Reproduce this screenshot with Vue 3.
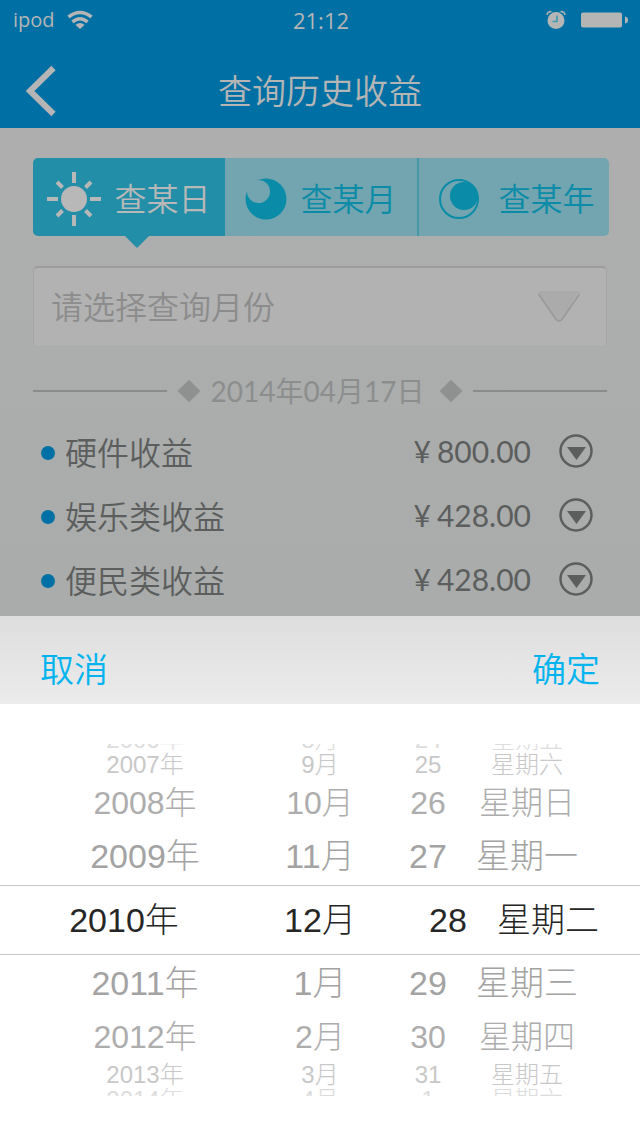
<script setup>
import { ref } from 'vue'

const tabs = [
  { id: 'day', label: '查某日' },
  { id: 'month', label: '查某月' },
  { id: 'year', label: '查某年' },
]
const activeTab = ref('day')
const month = ref('')

const items = [
  { name: '硬件收益', amount: '800.00' },
  { name: '娱乐类收益', amount: '428.00' },
  { name: '便民类收益', amount: '428.00' },
]

// depth: distance of a wheel row from the selected one
const wheel = [
  { depth: 'edge first', cells: ['2006年', '8月', '24', '星期五'] },
  { depth: 'far', cells: ['2007年', '9月', '25', '星期六'] },
  { depth: 'mid', cells: ['2008年', '10月', '26', '星期日'] },
  { depth: 'near', cells: ['2009年', '11月', '27', '星期一'] },
  { depth: 'selected', cells: ['2010年', '12月', '28', '星期二'] },
  { depth: 'near', cells: ['2011年', '1月', '29', '星期三'] },
  { depth: 'mid', cells: ['2012年', '2月', '30', '星期四'] },
  { depth: 'far', cells: ['2013年', '3月', '31', '星期五'] },
  { depth: 'edge', cells: ['2014年', '4月', '1', '星期六'] },
]
</script>

<template>
  <div class="page">
    <header class="header">
      <div class="status">
        <div class="carrier">
          <span>ipod</span>
          <svg class="wifi" viewBox="0 0 26 20" aria-hidden="true">
            <path d="M1.500 7Q13-2 24.500 7" fill="none" stroke="currentColor" stroke-width="3.500" />
            <path d="M5.500 12Q13 5.500 20.500 12" fill="none" stroke="currentColor" stroke-width="3.500" />
            <path d="M8.500 15Q13 11 17.500 15L13 19Z" fill="currentColor" />
          </svg>
        </div>
        <time>21:12</time>
        <div class="indicators">
          <svg class="alarm" viewBox="0 0 20 20" aria-hidden="true">
            <circle cx="10" cy="10.500" r="8.500" fill="currentColor" />
            <path d="M1 5Q1.500 1.500 5.500 1.500M19 5Q18.500 1.500 14.500 1.500" fill="none" stroke="currentColor" stroke-width="1.500" />
            <path d="M11 5.500V11.500H6.500" fill="none" stroke="#3f9bb0" stroke-width="1.700" />
          </svg>
          <svg class="battery" viewBox="0 0 48 16" aria-hidden="true">
            <rect x="0" y="0.500" width="41" height="15" rx="2" fill="currentColor" />
            <path d="M44 4.500Q47 5 47 8T44 11.500Z" fill="currentColor" />
          </svg>
        </div>
      </div>
      <div class="nav">
        <button class="back" type="button" aria-label="返回">
          <svg viewBox="0 0 30 50" aria-hidden="true">
            <path d="M27.500 2L4 25L27.500 48" fill="none" stroke="currentColor" stroke-width="6" />
          </svg>
        </button>
        <h1>查询历史收益</h1>
      </div>
    </header>

    <main class="content">
      <div class="tabs" role="tablist">
        <button
          v-for="tab in tabs"
          :key="tab.id"
          type="button"
          role="tab"
          class="tab"
          :class="{ active: activeTab === tab.id }"
          :aria-selected="activeTab === tab.id"
          @click="activeTab = tab.id"
        >
          <svg v-if="tab.id === 'day'" class="sun" viewBox="-27 -27 54 54" aria-hidden="true">
            <circle r="13" fill="currentColor" />
            <path
              d="M0-27V-16M0 16V27M-27 0H-16M16 0H27M-17-17L-11.500-11.500M17-17L11.500-11.500M-17 17L-11.500 11.500M17 17L11.500 11.500"
              stroke="currentColor"
              stroke-width="4"
            />
          </svg>
          <svg v-else-if="tab.id === 'month'" class="moon" viewBox="-21 -21 42 42" aria-hidden="true">
            <circle r="20.500" fill="currentColor" />
            <circle cx="-7.500" cy="-7.500" r="11.500" fill="#72a5af" />
          </svg>
          <svg v-else class="eclipse" viewBox="-20 -20 46 42" aria-hidden="true">
            <circle cy="1" r="19" fill="none" stroke="currentColor" stroke-width="2" />
            <circle cx="5" cy="-2" r="14" fill="currentColor" />
          </svg>
          <span>{{ tab.label }}</span>
        </button>
      </div>

      <div class="field">
        <select v-model="month" aria-label="查询月份">
          <option value="">请选择查询月份</option>
        </select>
        <svg class="chevron" viewBox="0 0 44 34" aria-hidden="true">
          <path d="M3 2H41L25 30Q22 33 19 30L1 4Z" fill="#ababab" />
          <path d="M1.500 4L19 29.500Q22 32.500 25 29.500L42.500 4" fill="none" stroke="#999" stroke-width="1.500" />
          <path d="M2 2H42" stroke="#a5a5a5" stroke-width="1" />
        </svg>
      </div>

      <div class="date">
        <i class="rule"></i>
        <i class="diamond"></i>
        <h2>2014年04月17日</h2>
        <i class="diamond"></i>
        <i class="rule"></i>
      </div>

      <ul class="items">
        <li v-for="item in items" :key="item.name">
          <i class="dot"></i>
          <span class="name">{{ item.name }}</span>
          <span class="amount"><span>¥</span><span>{{ item.amount }}</span></span>
          <button class="expand" type="button" :aria-label="'展开' + item.name">
            <svg viewBox="0 0 34 34" aria-hidden="true">
              <circle cx="17" cy="17" r="15.500" fill="none" stroke="currentColor" stroke-width="2.500" />
              <path d="M8 13H27L17.500 26Z" fill="currentColor" />
            </svg>
          </button>
        </li>
      </ul>
    </main>

    <section class="sheet">
      <div class="toolbar">
        <button type="button">取消</button>
        <button type="button">确定</button>
      </div>
      <div class="wheel">
        <div v-for="row in wheel" :key="row.cells[0]" class="row" :class="row.depth">
          <span v-for="cell in row.cells" :key="cell">{{ cell }}</span>
        </div>
      </div>
    </section>
  </div>
</template>

<style>
body {
  margin: 0;
}
</style>

<style scoped>
.page {
  display: flex;
  flex-direction: column;
  min-height: 100vh;
  background: #fff;
  font-family: Lato, "Noto Sans CJK SC", sans-serif;
  font-weight: 400;
}
button {
  margin: 0;
  padding: 0;
  border: 0;
  background: none;
  color: inherit;
  font: inherit;
  cursor: pointer;
}
svg {
  display: block;
  flex: none;
}
h1,
h2,
ul {
  margin: 0;
  padding: 0;
  font-weight: inherit;
}

.header {
  background: #0070a4;
  color: #b5b5b5;
}
.status {
  display: grid;
  grid-template-columns: 1fr auto 1fr;
  align-items: center;
  height: 40px;
  padding: 0 11px 0 13px;
  font-family: "Open Sans", sans-serif;
  font-size: 22px;
  line-height: 40px;
}
.carrier,
.indicators {
  display: flex;
  align-items: center;
}
.carrier {
  gap: 12px;
  font-size: 20px;
  line-height: 36px;
}
.indicators {
  justify-content: flex-end;
  gap: 15px;
}
.wifi {
  width: 26px;
  height: 20px;
}
.alarm {
  width: 20px;
  height: 20px;
}
.battery {
  width: 48px;
  height: 16px;
}
.nav {
  display: grid;
  grid-template-columns: 80px 1fr 80px;
  align-items: center;
  box-sizing: border-box;
  height: 88px;
  padding-top: 13px;
}
.back {
  display: flex;
  align-items: center;
  padding-left: 26px;
}
.back svg {
  width: 30px;
  height: 52px;
}
h1 {
  font-size: 34px;
  font-weight: 350;
  line-height: 48px;
  text-align: center;
}

.content {
  padding: 30px 33px 3px;
  background: linear-gradient(#aeaeaf, #a9acab);
}
.tabs {
  display: grid;
  grid-template-columns: repeat(3, 1fr);
  margin-right: -2px;
}
.tab {
  position: relative;
  display: flex;
  align-items: center;
  justify-content: center;
  gap: 13px;
  box-sizing: border-box;
  height: 78px;
  padding-top: 4px;
  background: #72a5af;
  color: #0a8ba8;
  font-size: 32px;
  font-weight: 350;
  line-height: 44px;
}
.tab:first-child {
  border-radius: 5px 0 0 5px;
}
.tab:last-child {
  padding-left: 6px;
  border-left: 2px solid #4698a8;
  border-radius: 0 5px 5px 0;
}
.tab.active {
  background: #228ea7;
  color: #b8b8b8;
}
.tab.active::after {
  content: "";
  position: absolute;
  top: 100%;
  left: 50%;
  margin-left: -4px;
  border: 12px solid transparent;
  border-top-color: #228ea7;
  border-bottom: 0;
}
.sun {
  width: 54px;
  height: 54px;
}
.moon {
  width: 42px;
  height: 42px;
}
.eclipse {
  width: 46px;
  height: 42px;
}

.field {
  display: grid;
  align-items: center;
  height: 77px;
  margin-top: 30px;
  border: 1px solid #a6a6a6;
  border-top: 2px solid #9c9c9c;
  border-bottom: 0;
  border-radius: 5px 5px 0 0;
  background: #b2b2b2;
}
.field select,
.chevron {
  grid-area: 1 / 1;
}
.field select {
  width: 100%;
  height: 100%;
  padding: 0 80px 0 17px;
  border: 0;
  background: none;
  color: #8c8c8c;
  font: inherit;
  font-size: 32px;
  font-weight: 350;
  appearance: none;
}
.chevron {
  justify-self: end;
  width: 44px;
  height: 34px;
  margin-right: 25px;
  pointer-events: none;
}

.date {
  display: flex;
  align-items: center;
  gap: 12px;
  height: 32px;
  margin: 30px 0 14px;
  color: #8c8e8e;
}
.date h2 {
  margin-right: 5px;
  font-size: 28px;
  line-height: 32px;
}
.rule {
  flex: 1;
  height: 2px;
  background: #8a8c8b;
}
.diamond {
  width: 16px;
  height: 16px;
  margin: 0 2px;
  background: #8f9191;
  transform: rotate(45deg);
}
.items {
  list-style: none;
  color: #5c5e5d;
}
.items li {
  display: flex;
  align-items: center;
  height: 64px;
  padding: 0 14px 0 8px;
}
.dot {
  width: 14px;
  height: 14px;
  border-radius: 50%;
  background: #0071a6;
}
.name {
  flex: 1;
  margin-left: 10px;
  font-size: 32px;
  font-weight: 350;
  line-height: 44px;
}
.amount {
  display: flex;
  gap: 6px;
  padding-bottom: 4px;
  font-size: 30px;
  line-height: 40px;
}
.expand {
  margin-left: 28px;
  padding-bottom: 4px;
}
.expand svg {
  width: 34px;
  height: 34px;
}

.sheet {
  flex: 1;
  background: #fff;
}
.toolbar {
  display: flex;
  justify-content: space-between;
  height: 88px;
  padding: 0 40px;
  background: linear-gradient(#dedede, #ebebeb);
  color: #00b4f0;
  font-size: 34px;
  font-weight: 350;
}
.toolbar button {
  padding-top: 14px;
}
.wheel {
  padding: 40px 0;
  font-family: "Liberation Sans", "Noto Sans CJK SC", sans-serif;
  font-weight: 300;
}
.row {
  display: grid;
  grid-template-columns: 210fr 140fr 76fr 122fr;
  align-items: center;
  padding: 0 52px 0 40px;
  overflow: hidden;
  text-align: center;
  white-space: nowrap;
}
.edge {
  align-content: start;
  height: 8px;
  color: #dcdcdc;
  font-size: 24px;
  line-height: 24px;
}
.edge.first {
  align-content: end;
}
.far {
  height: 26px;
  color: #c8c8c8;
  font-size: 24px;
  line-height: 26px;
}
.mid {
  height: 50px;
  color: #adadad;
  font-size: 32px;
  line-height: 50px;
}
.near {
  height: 57px;
  color: #a3a3a3;
  font-size: 34px;
  line-height: 57px;
}
.selected {
  grid-template-columns: 208fr 184fr 72fr 128fr;
  height: 68px;
  padding: 0 28px 0 20px;
  border: solid #c8c8c8;
  border-width: 1px 0;
  color: #262626;
  font-size: 34px;
  line-height: 68px;
}
</style>
